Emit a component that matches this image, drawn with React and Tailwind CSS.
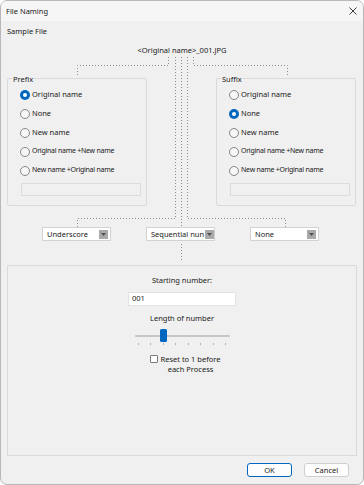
import React from 'react';

const PREFIX = ['Original name', 'None', 'New name', 'Original name +New name', 'New name +Original name'];

function Radio({ label, checked }) {
  const small = label.includes('+');
  return (
    <div className="h-[19px] flex items-center pl-[12px] gap-[2px]">
      {checked ? (
        <span className="w-[10px] h-[10px] rounded-full bg-[#0067c0] flex items-center justify-center">
          <span className="w-[4px] h-[4px] rounded-full bg-white" />
        </span>
      ) : (
        <span className="w-[10px] h-[10px] rounded-full border border-[#868686] bg-[#f7f7f7]" />
      )}
      <span className={small ? 'text-[7px] tracking-[-0.25px] text-[#1a1a1a]' : 'text-[7.5px] text-[#1a1a1a]'}>{label}</span>
    </div>
  );
}

function Group({ title, selected }) {
  return (
    <div className="relative w-[140px] h-[128px] border border-[#dadada] rounded-[2px] pt-[6px]">
      <span className="absolute left-[4px] top-[-5px] px-[1px] bg-[#f0f0f0] leading-[10px] text-[7.5px]">{title}</span>
      {PREFIX.map((p, i) => <Radio key={p} label={p} checked={i === selected} />)}
      <div className="ml-[13px] mt-[3px] w-[120px] h-[13px] border border-[#dcdcdc] bg-[#f0f0f0]" />
    </div>
  );
}

function Combo({ value }) {
  return (
    <div className="w-[69px] h-[14px] bg-white border border-[#d2d2d2] flex items-center pl-[4px] pr-[2px]">
      <span className="text-[7.5px] leading-[10px] whitespace-nowrap flex-1">{value}</span>
      <span className="w-[9px] h-[9px] bg-[#a9a9a9] flex items-center justify-center shrink-0 ml-[1px]">
        <svg width="5" height="3" viewBox="0 0 5 3"><polygon points="0,0 5,0 2.5,3" fill="#505050" /></svg>
      </span>
    </div>
  );
}

function Connectors() {
  const s = { stroke: '#8e8e8e', strokeWidth: 1, strokeDasharray: '1 2', fill: 'none' };
  return (
    <svg className="absolute left-0 top-0 pointer-events-none" width="364" height="485">
      <path d="M167.5 56 V64.5 H76.5 V74" {...s} />
      <path d="M174.5 56 V217.5 H76.5 V227" {...s} />
      <path d="M180.5 56 V227 M180.5 243 V261" {...s} />
      <path d="M186.5 56 V217.5 H284.5 V227" {...s} />
      <path d="M192.5 56 V64.5 H286.5 V74" {...s} />
    </svg>
  );
}

export default function App() {
  const ticks = [0, 1, 2, 3, 4, 5, 6, 7];
  return (
    <div className="relative w-[364px] h-[485px] bg-[#f0f0f0] border border-[#b8b8b8] rounded-[7px] overflow-hidden flex flex-col font-['Noto_Sans','Open_Sans',sans-serif] text-[#1a1a1a]">
      {/* title bar */}
      <div className="h-[20px] bg-[#f6f6f6] flex items-center pl-[5px] pr-[6px] shrink-0">
        <span className="text-[7.5px] leading-[10px]">File Naming</span>
        <svg className="ml-auto" width="8" height="8" viewBox="0 0 8 8">
          <path d="M0.5 0.5 L7.5 7.5 M7.5 0.5 L0.5 7.5" stroke="#2a2a2a" strokeWidth="0.9" />
        </svg>
      </div>

      <div className="flex flex-col px-[6px]">
        <span className="mt-[5px] text-[7.5px] leading-[10px]">Sample File</span>
        <span className="mt-[9px] text-center text-[7.5px] leading-[10px]">&lt;Original name&gt;_001.JPG</span>

        <div className="mt-[23px] flex justify-between">
          <Group title="Prefix" selected={0} />
          <div className="mr-[1px]"><Group title="Suffix" selected={1} /></div>
        </div>

        <div className="mt-[21px] flex gap-[35px] pl-[35px]">
          <Combo value="Underscore" />
          <Combo value="Sequential nun" />
          <Combo value="None" />
        </div>

        <div className="mt-[24px] h-[191px] border border-[#dadada] flex flex-col items-center">
          <span className="mt-[9px] text-[7.5px] leading-[10px]">Starting number:</span>
          <div className="mt-[7px] w-[108px] h-[14px] bg-white border border-[#e2e2e2] flex items-center pl-[3px] text-[7.5px]">001</div>
          <span className="mt-[7px] text-[7.5px] leading-[10px]">Length of number</span>
          <div className="mt-[6px] w-[95px] flex flex-col">
            <div className="relative h-[13px] flex items-center">
              <div className="w-full h-[2px] bg-[#c6c6c6] rounded-full" />
              <div className="absolute left-[25px] top-0 w-[7px] h-[13px] bg-[#0067c0] rounded-[1.5px]" />
            </div>
            <div className="mt-[1px] flex justify-between px-[3px]">
              {ticks.map(t => <span key={t} className="w-[1px] h-[2px] bg-[#b0b0b0]" />)}
            </div>
          </div>
          <div className="mt-[9px] flex items-start gap-[3px] pl-[6px]">
            <span className="mt-[1px] w-[8px] h-[8px] border border-[#7a7a7a] bg-white rounded-[1px]" />
            <span className="text-center text-[7.5px] leading-[10px]">Reset to 1 before<br />each Process</span>
          </div>
        </div>

        <div className="mt-[7px] flex justify-end gap-[12px] pr-[8px]">
          <button className="w-[45px] h-[14px] bg-[#fdfdfd] border border-[#0067c0] rounded-[3px] text-[7.5px] leading-[10px]">OK</button>
          <button className="w-[45px] h-[14px] bg-[#fdfdfd] border border-[#cfcfcf] rounded-[3px] text-[7.5px] leading-[10px]">Cancel</button>
        </div>
      </div>
      <Connectors />
    </div>
  );
}
